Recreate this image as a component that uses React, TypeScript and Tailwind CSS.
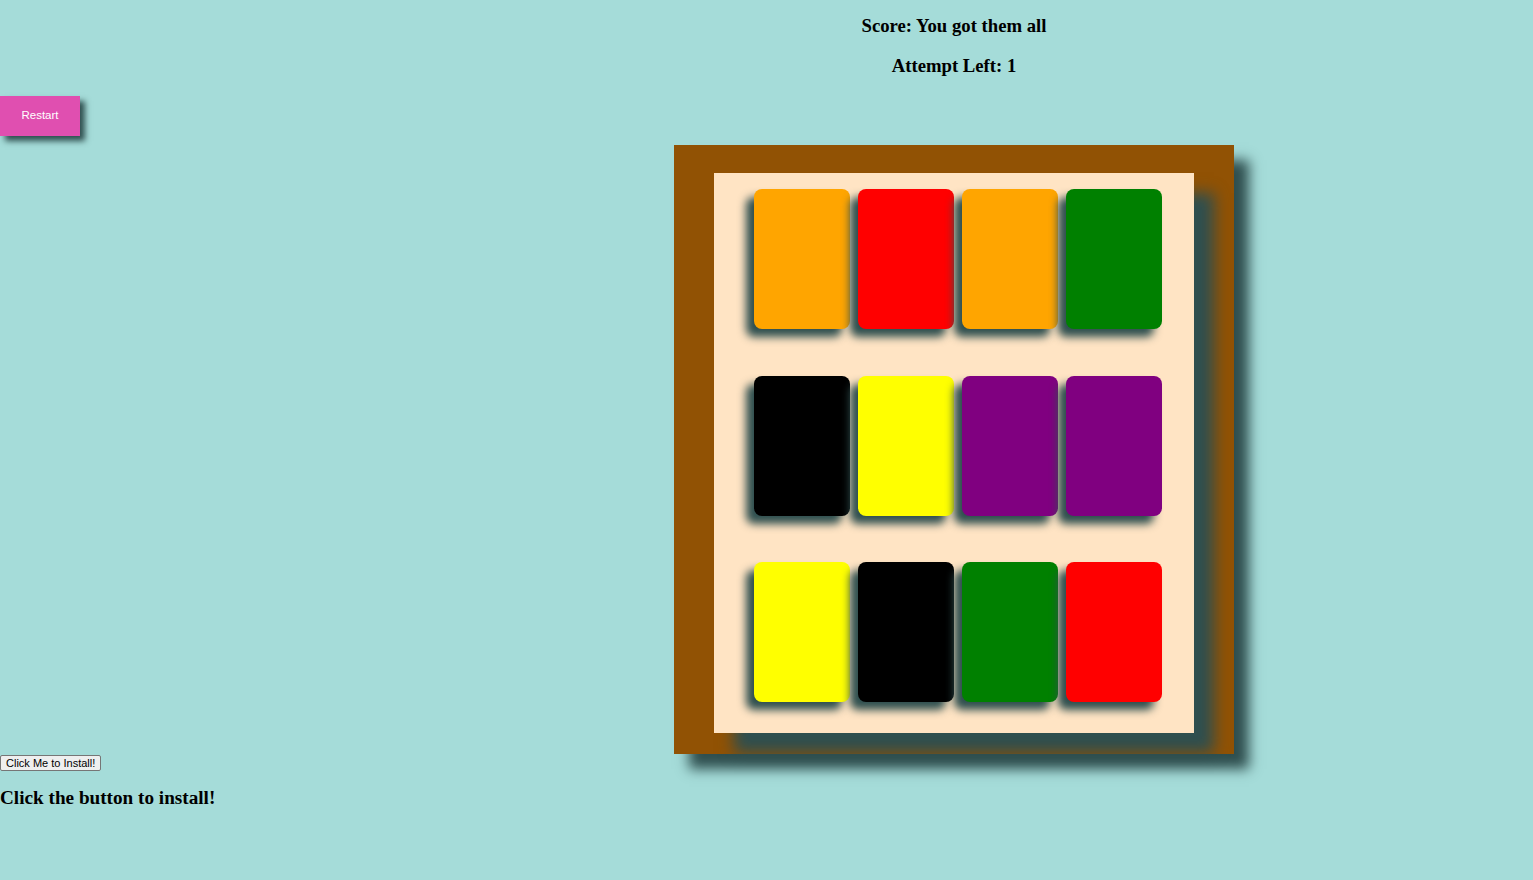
const rows = [
  ['bg-[#ffa500]', 'bg-[#ff0000]', 'bg-[#ffa500]', 'bg-[#008000]'],
  ['bg-[#000000]', 'bg-[#ffff00]', 'bg-[#800080]', 'bg-[#800080]'],
  ['bg-[#ffff00]', 'bg-[#000000]', 'bg-[#008000]', 'bg-[#ff0000]'],
]

function Card({ color }: { color: string }) {
  return <div className={`w-[96px] h-[140px] rounded-[8px] shadow-[-8px_8px_9px_#2f4f4f] ${color}`} />
}

export default function App() {
  return (
    <div className="min-h-[880px] bg-[#a5dcd9] text-black" style={{ fontFamily: '"Liberation Serif", serif' }}>
      <div className="flex h-[755px]">
        <div className="w-[375px] shrink-0">
          <button
            className="mt-[96px] w-[80px] h-[40px] bg-[#e04fb0] text-white text-[11.5px] shadow-[5px_5px_6px_#2f4f4f]"
            style={{ fontFamily: '"Liberation Sans", Arial, sans-serif' }}
          >
            Restart
          </button>
        </div>
        <div className="flex-1 flex flex-col items-center">
          <h3 className="mt-[15px] text-[18.72px] leading-[22px] font-bold">Score: You got them all</h3>
          <h3 className="mt-[18px] text-[18.72px] leading-[22px] font-bold">Attempt Left: 1</h3>
          <div className="mt-[68px] w-[560px] h-[609px] bg-[#915204] pt-[28px] pl-[40px] shadow-[15px_15px_12px_#2f4f4f]">
            <div className="w-[480px] h-[560px] bg-[#ffe4c4] pt-[16px] pl-[40px] shadow-[20px_20px_14px_#2f4f4f]">
              <div className="flex flex-col gap-[46.5px]">
                {rows.map((row, i) => (
                  <div key={i} className="flex gap-[8px]">
                    {row.map((c, j) => (
                      <Card key={j} color={c} />
                    ))}
                  </div>
                ))}
              </div>
            </div>
          </div>
        </div>
      </div>
      <button
        className="block h-[16px] px-[5px] text-[11px] leading-[12px] bg-[#efefef] border border-[#767676] rounded-[2px]"
        style={{ fontFamily: '"Liberation Sans", Arial, sans-serif' }}
      >
        Click Me to Install!
      </button>
      <h3 className="mt-[16px] text-[19.2px] leading-[22px] font-bold">Click the button to install!</h3>
    </div>
  )
}
